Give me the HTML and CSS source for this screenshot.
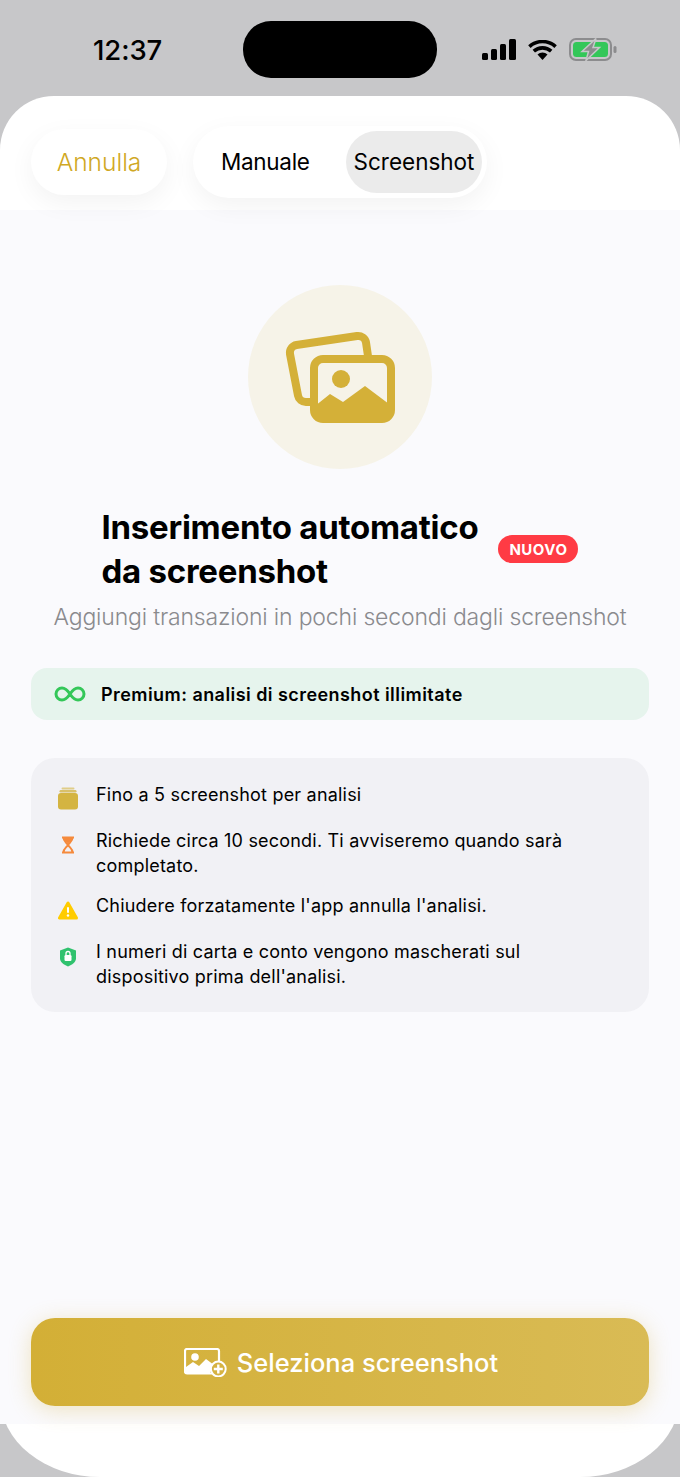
FILE: index.html
```html
<!doctype html>
<html lang="it">
<head>
<meta charset="utf-8">
<meta name="viewport" content="width=device-width, initial-scale=1.0">
<link rel="stylesheet" href="styles.css">
<title>Inserimento automatico da screenshot</title>
</head>
<body>
<div class="phone">
  <div class="status">
    <span class="time">12:37</span>
    <span class="island"></span>
    <span class="status-icons">
      <svg width="34" height="21" viewBox="0 0 34 21"><rect x="0" y="14" width="6" height="7" rx="1.500"/><rect x="9" y="10" width="6" height="11" rx="1.500"/><rect x="18" y="5" width="6" height="16" rx="1.500"/><rect x="27" y="0" width="7" height="21" rx="1.500"/></svg>
      <svg class="wifi" width="29" height="20" viewBox="0 0 29 20"><path d="M14.500 20l-5-5.600a7.400 7.400 0 0 1 10 0z"/><path d="M5.800 11.200a13 13 0 0 1 17.400 0" fill="none" stroke="#000" stroke-width="3.600"/><path d="M1.400 6.600a19.500 19.500 0 0 1 26.200 0" fill="none" stroke="#000" stroke-width="3.600"/></svg>
      <svg class="battery" width="48" height="23" viewBox="0 0 48 23"><rect x="1" y="1" width="41" height="21" rx="6" fill="none" stroke="#8c8c8e" stroke-width="2"/><rect x="4" y="4" width="35" height="15" rx="3.500" fill="#34c759"/><rect x="44.500" y="8" width="3" height="7" rx="1.500" fill="#8c8c8e"/><path d="M27 .5L13 13.500h6.500L17 22.500 30.500 9.500H24z" fill="#8c8c8e" stroke="#c7c7c9" stroke-width="1.500"/></svg>
    </span>
  </div>

  <div class="sheet">
    <div class="header">
      <button class="pill cancel">Annulla</button>
      <div class="pill segments">
        <span class="segment">Manuale</span>
        <span class="segment active">Screenshot</span>
      </div>
    </div>

    <div class="content">
      <div class="hero">
        <svg width="110" height="92" viewBox="0 0 110 92">
          <path d="M25 71h-4a8 8 0 0 1-8-6.500L5 23a8 8 0 0 1 6.500-9L72 5a8 8 0 0 1 9 6.500L83 25" fill="none" stroke="#d4b038" stroke-width="8"/>
          <rect x="29" y="28" width="77" height="60" rx="9" fill="none" stroke="#d4b038" stroke-width="8"/>
          <circle cx="56" cy="48" r="9" fill="#d4b038"/>
          <path d="M30 75l15-12 13 8 22-16 24 18v16H30z" fill="#d4b038"/>
        </svg>
      </div>

      <div class="title-row">
        <h1>Inserimento automatico<br>da screenshot</h1>
        <span class="badge">NUOVO</span>
      </div>
      <p class="subtitle">Aggiungi transazioni in pochi secondi dagli screenshot</p>

      <div class="premium">
        <svg width="32" height="16" viewBox="0 0 32 16"><path d="M16 8C13 3.500 10.500 2 8 2a6 6 0 0 0 0 12c2.500 0 5-1.500 8-6s5.500-6 8-6a6 6 0 0 1 0 12c-2.500 0-5-1.500-8-6z" fill="none" stroke="#34c759" stroke-width="3"/></svg>
        <span>Premium: analisi di screenshot illimitate</span>
      </div>

      <ul class="notes">
        <li>
          <svg viewBox="0 0 20 24"><rect x="3.500" y="1.500" width="13" height="2" rx="1" fill="#e0cd88"/><rect x="1.500" y="4" width="17" height="2.500" rx="1.200" fill="#d9c069"/><rect x="0" y="7" width="20" height="16.500" rx="3" fill="#d4b441"/></svg>
          <span>Fino a 5 screenshot per analisi</span>
        </li>
        <li>
          <svg viewBox="0 0 20 24"><path d="M4 5.500h12M4 20.500h12M5.500 5.500c0 4 2.500 4.500 4.500 7.500 2-3 4.500-3.500 4.500-7.500M5.500 20.500c0-4 2.500-4.500 4.500-7.500 2 3 4.500 3.500 4.500 7.500" fill="none" stroke="#f58a3c" stroke-width="2"/><path d="M6 6h8c0 2.500-2 3.500-4 5.500C8 9.500 6 8.500 6 6z" fill="#f58a3c"/></svg>
          <span>Richiede circa 10 secondi. Ti avviseremo quando sarà completato.</span>
        </li>
        <li>
          <svg viewBox="0 0 20 24"><path d="M10 6L1.500 21h17z" fill="#ffcc00" stroke="#ffcc00" stroke-width="3" stroke-linejoin="round"/><rect x="9" y="10" width="2" height="6" rx="1" fill="#fff"/><circle cx="10" cy="18.500" r="1.200" fill="#fff"/></svg>
          <span>Chiudere forzatamente l'app annulla l'analisi.</span>
        </li>
        <li>
          <svg viewBox="0 0 20 24"><path d="M10 4.500l8 3v8c0 3.500-4 6.500-8 8-4-1.500-8-4.500-8-8v-8z" fill="#30c26e"/><rect x="6.500" y="12" width="7" height="6" rx="1.200" fill="#fff"/><path d="M8 12v-1.500a2 2 0 0 1 4 0V12" fill="none" stroke="#fff" stroke-width="1.300"/></svg>
          <span>I numeri di carta e conto vengono mascherati sul dispositivo prima dell'analisi.</span>
        </li>
      </ul>

      <button class="select">
        <svg width="43" height="29" viewBox="0 0 43 29">
          <path d="M28 25.500H3a2 2 0 0 1-2-2V3a2 2 0 0 1 2-2h30a2 2 0 0 1 2 2v11" fill="none" stroke="#fff" stroke-width="2.200"/>
          <circle cx="11" cy="9" r="3.800" fill="#fff"/>
          <path d="M2 25v-6l7-5 6 4 7-7 8 6-4 8z" fill="#fff"/>
          <circle cx="34.300" cy="21" r="7.400" fill="#d6b342" stroke="#fff" stroke-width="2"/>
          <path d="M34.300 16.500v9M29.800 21h9" stroke="#fff" stroke-width="2.400"/>
        </svg>
        <span>Seleziona screenshot</span>
      </button>
    </div>
  </div>
</div>
</body>
</html>
```

FILE: styles.css
```css
* {
    box-sizing: border-box;
}
html,
body {
    margin: 0;
    padding: 0;
}
body {
    font-family: Inter, "Liberation Sans", sans-serif;
    color: #000;
    background-color: #c7c7c9;
}
h1,
p,
ul {
    margin: 0;
    padding: 0;
}
button {
    font-family: inherit;
    border: 0;
}
.phone {
    display: flex;
    flex-direction: column;
    width: 680px;
    height: 1477px;
}

/* status bar */
.status {
    display: grid;
    grid-template-columns: 243px 194px 1fr;
    height: 96px;
    padding-top: 21px;
    flex: none;
}
.time {
    height: 57px;
    line-height: 58px;
    padding-left: 93px;
    font-size: 27.500px;
    font-weight: 500;
    letter-spacing: -0.1px;
}
.island {
    height: 57px;
    background-color: #000;
    border-radius: 28px;
}
.status-icons {
    display: flex;
    align-items: center;
    height: 57px;
    padding-left: 45px;
    gap: 12px;
}
.wifi {
    margin-top: 1px;
}

/* sheet */
.sheet {
    display: flex;
    flex-direction: column;
    flex: 1;
    padding-bottom: 53px;
    background-color: white;
    border-radius: 54px 54px 100px 100px / 54px 54px 80px 80px;
}
.header {
    position: relative;
    z-index: 1;
    display: flex;
    align-items: center;
    gap: 26px;
    flex: none;
    height: 114px;
    padding: 27px 0 10px 31px;
}
.pill {
    background-color: white;
    border-radius: 36px;
    box-shadow: 0 8px 26px rgba(0, 0, 0, 0.05);
}
.cancel {
    width: 136px;
    height: 66px;
    font-size: 24.500px;
    font-weight: 300;
    color: #d0a824;
}
.segments {
    display: flex;
    align-items: center;
    justify-content: space-between;
    width: 294px;
    height: 72px;
    padding: 0 5px 0 28px;
}
.segment {
    font-size: 22.500px;
    font-weight: 400;
    letter-spacing: -0.3px;
}
.segment.active {
    display: flex;
    align-items: center;
    justify-content: center;
    width: 136px;
    height: 62px;
    letter-spacing: 0;
    background-color: #ebebeb;
    border-radius: 31px;
}

/* content */
.content {
    display: flex;
    flex-direction: column;
    flex: 1;
    padding: 75px 31px 18px 31px;
    background-color: #fafafd;
}
.hero {
    display: flex;
    align-items: center;
    justify-content: center;
    align-self: center;
    width: 184px;
    height: 184px;
    background-color: #f6f3e8;
    border-radius: 50%;
}
.title-row {
    display: flex;
    align-items: center;
    justify-content: center;
    gap: 20px;
    margin-top: 36px;
}
h1 {
    font-size: 33px;
    font-weight: 700;
    line-height: 44px;
    letter-spacing: -0.25px;
}
.badge {
    padding: 0 11px;
    height: 28px;
    line-height: 29px;
    color: white;
    font-size: 15px;
    font-weight: 700;
    letter-spacing: 0.5px;
    background-color: #ff3b44;
    border-radius: 14px;
}
.subtitle {
    margin-top: 10px;
    font-size: 23px;
    font-weight: 300;
    line-height: 28px;
    letter-spacing: -0.17px;
    text-align: center;
    color: #8a8a8e;
}
.premium {
    display: flex;
    align-items: center;
    gap: 15px;
    height: 52px;
    margin-top: 37px;
    padding-left: 23px;
    font-size: 18px;
    font-weight: 600;
    letter-spacing: 0.44px;
    background-color: #e6f4ed;
    border-radius: 16px;
}
.notes {
    display: flex;
    flex-direction: column;
    gap: 15px;
    margin-top: 38px;
    padding: 23.500px 50px 23.500px 27px;
    list-style: none;
    background-color: #f1f1f5;
    border-radius: 24px;
}
.notes li {
    display: flex;
    gap: 18px;
    min-height: 31px;
    font-size: 18px;
    line-height: 25px;
    letter-spacing: 0.2px;
}
.notes svg {
    flex: none;
    width: 20px;
    height: 24px;
    margin-top: 4px;
}
.select {
    display: flex;
    align-items: center;
    justify-content: center;
    gap: 10px;
    height: 88px;
    margin-top: auto;
    padding: 0 0 0 2px;
    color: white;
    font-size: 25.500px;
    font-weight: 500;
    background: linear-gradient(90deg, #d3af36, #d9bb55);
    border-radius: 24px;
    box-shadow: 0 4px 22px rgba(212, 176, 56, 0.3);
}
```
